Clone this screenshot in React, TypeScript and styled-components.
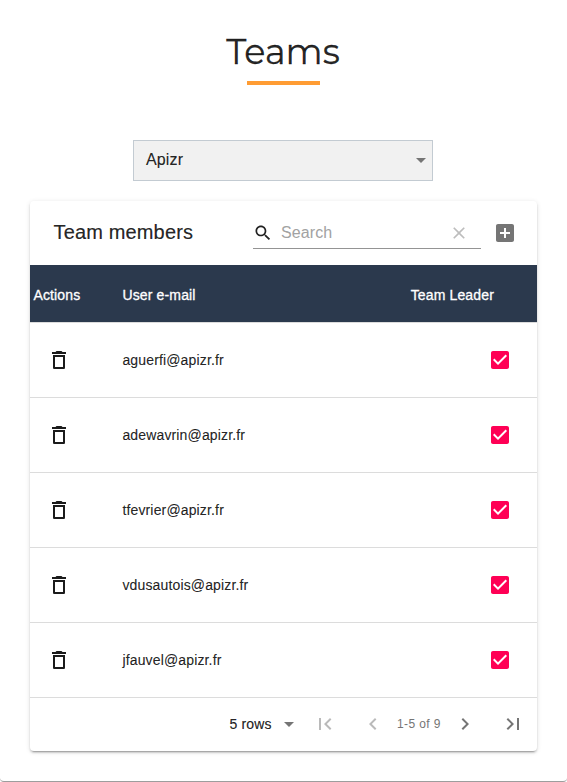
import React from 'react';
import styled, { createGlobalStyle } from 'styled-components';

const GlobalStyle = createGlobalStyle`
  *, *::before, *::after { box-sizing: border-box; }
  body {
    margin: 0;
    background: #fff;
    color: rgba(0, 0, 0, 0.87);
    font-family: "Liberation Sans", Arial, sans-serif;
  }
`;

const shadow =
  '0 3px 1px -2px rgba(0,0,0,0.2), 0 2px 2px 0 rgba(0,0,0,0.14), 0 1px 5px 0 rgba(0,0,0,0.12)';

const Page = styled.main`
  display: flex;
  flex-direction: column;
  align-items: center;
  height: 782px;
  overflow: hidden;
  border-bottom: 1px solid #9d9d9d;
  border-radius: 4px;
  background: #fff;
`;

const Title = styled.h1`
  margin: 29px 1px 0 0;
  height: 52px;
  line-height: 46px;
  font-family: Montserrat, Inter, sans-serif;
  font-size: 35px;
  font-weight: 400;
  white-space: nowrap;
  -webkit-text-stroke: 0.3px currentColor;
`;

const TitleRule = styled.div`
  width: 73px;
  height: 4px;
  background: #ff9c33;
`;

const TeamSelect = styled.div`
  display: flex;
  align-items: center;
  justify-content: space-between;
  width: 300px;
  height: 41px;
  margin: 55px 1px 20px 0;
  padding: 0 0 2px 12px;
  border: 1px solid #c3cbd2;
  background: #f1f1f1;
  font-size: 16px;
  letter-spacing: 0.15px;
  -webkit-text-stroke: 0.15px currentColor;

  svg { margin-right: -1px; }
`;

const Card = styled.section`
  width: 507px;
  height: 550px;
  border-radius: 4px;
  background: #fff;
  box-shadow: ${shadow};
`;

const Toolbar = styled.header`
  display: flex;
  align-items: center;
  height: 64px;
  padding: 0 20px 0 23.5px;
`;

const CardTitle = styled.h2`
  flex: 1;
  margin: 0;
  padding-bottom: 2px;
  font-size: 20px;
  font-weight: 400;
  letter-spacing: 0.15px;
  -webkit-text-stroke: 0.2px currentColor;
`;

const SearchField = styled.div`
  display: flex;
  align-items: center;
  width: 228px;
  height: 33px;
  margin: 0 12px 1px 0;
  padding: 2px 12px 0 0;
  border-bottom: 1px solid #949494;
`;

const Placeholder = styled.span`
  flex: 1;
  padding: 0 0 1px 8px;
  color: #a2a2a2;
  font-size: 16px;
  letter-spacing: 0.1px;
`;

const Icon = styled.svg<{ $size?: number; $tone?: string }>`
  display: block;
  flex: none;
  width: ${(p) => p.$size ?? 24}px;
  height: ${(p) => p.$size ?? 24}px;
  fill: ${(p) => p.$tone ?? '#757575'};
`;

const Row = styled.div<{ $head?: boolean }>`
  display: grid;
  grid-template-columns: 92.4px 1fr 150px;
  align-items: center;
  height: ${(p) => (p.$head ? 58 : 75)}px;
  padding-top: ${(p) => (p.$head ? 3 : 0)}px;
  border-bottom: 1px solid #dcdcdc;
  background: ${(p) => (p.$head ? '#2b394d' : 'transparent')};
  background-clip: padding-box;
  color: ${(p) => (p.$head ? '#fff' : 'inherit')};
  font-size: 14px;
  letter-spacing: 0.15px;
  -webkit-text-stroke: ${(p) => (p.$head ? '0.3px #fff' : '0.15px currentColor')};
`;

const ActionCell = styled.div<{ $head?: boolean }>`
  padding-left: ${(p) => (p.$head ? 3.4 : 17)}px;
`;

const LeaderCell = styled.div<{ $head?: boolean }>`
  display: flex;
  justify-content: flex-end;
  padding-right: ${(p) => (p.$head ? 43 : 25)}px;
`;

const Footer = styled.footer`
  display: flex;
  align-items: center;
  justify-content: flex-end;
  height: 52px;
  padding-right: 12px;
`;

const RowsSelect = styled.div`
  display: flex;
  align-items: center;
  width: 71.5px;
  margin-right: 12px;
  justify-content: space-between;
  font-size: 14px;
  white-space: nowrap;
  letter-spacing: 0.15px;
  -webkit-text-stroke: 0.2px currentColor;
`;

const Range = styled.span`
  width: 68px;
  padding-left: 12px;
  color: #757575;
  font-size: 12px;
  letter-spacing: 0.4px;
  white-space: nowrap;
`;

const PageButton = styled.span<{ $gap?: number }>`
  margin-right: ${(p) => p.$gap ?? 0}px;
`;

const paths = {
  search:
    'M15.5 14h-.79l-.28-.27C15.41 12.59 16 11.11 16 9.5 16 5.91 13.09 3 9.5 3S3 5.91 3 9.5 5.91 16 9.5 16c1.61 0 3.09-.59 4.23-1.57l.27.28v.79l5 4.99L20.49 19l-4.99-5zm-6 0C7.01 14 5 11.99 5 9.5S7.01 5 9.5 5 14 7.01 14 9.5 11.99 14 9.5 14z',
  clear:
    'M19 6.41L17.59 5 12 10.59 6.41 5 5 6.41 10.59 12 5 17.59 6.41 19 12 13.41 17.59 19 19 17.59 13.41 12z',
  addBox:
    'M19 3H5c-1.11 0-2 .9-2 2v14c0 1.1.89 2 2 2h14c1.1 0 2-.9 2-2V5c0-1.1-.9-2-2-2zm-2 10h-4v4h-2v-4H7v-2h4V7h2v4h4v2z',
  trash:
    'M6 19.5c0 1 .5 1.5 1.5 1.5h9c1 0 1.5-.5 1.5-1.5V7H6v12.5zM8 9h8v10H8V9zm7.5-5l-1-1h-5l-1 1H5v2h14V4z',
  checked:
    'M19 3H5c-1.11 0-2 .9-2 2v14c0 1.1.89 2 2 2h14c1.11 0 2-.9 2-2V5c0-1.1-.89-2-2-2zm-9 14l-5-5 1.41-1.41L10 14.17l7.59-7.59L19 8l-9 9z',
  dropDown: 'M7 10l5 5 5-5z',
  first: 'M18.41 16.59L13.82 12l4.59-4.59L17 6l-6 6 6 6zM6 6h2v12H6z',
  prev: 'M15.41 7.41L14 6l-6 6 6 6 1.41-1.41L10.83 12z',
  next: 'M10 6L8.59 7.41 13.17 12l-4.58 4.59L10 18l6-6z',
  last: 'M5.59 7.41L10.18 12l-4.59 4.59L7 18l6-6-6-6zM16 6h2v12h-2z',
};

function Glyph({ name, size, tone }: { name: keyof typeof paths; size?: number; tone?: string }) {
  return (
    <Icon viewBox="0 0 24 24" $size={size} $tone={tone} aria-hidden="true">
      <path d={paths[name]} />
    </Icon>
  );
}

const members = [
  'aguerfi@apizr.fr',
  'adewavrin@apizr.fr',
  'tfevrier@apizr.fr',
  'vdusautois@apizr.fr',
  'jfauvel@apizr.fr',
];

export default function App() {
  return (
    <>
      <GlobalStyle />
      <Page>
        <Title>Teams</Title>
        <TitleRule />
        <TeamSelect>
          Apizr
          <Glyph name="dropDown" />
        </TeamSelect>
        <Card>
          <Toolbar>
            <CardTitle>Team members</CardTitle>
            <SearchField>
              <Glyph name="search" size={20} tone="#212121" />
              <Placeholder>Search</Placeholder>
              <Glyph name="clear" size={20} tone="#bdbdbd" />
            </SearchField>
            <Glyph name="addBox" />
          </Toolbar>
          <Row $head>
            <ActionCell $head>Actions</ActionCell>
            <span>User e-mail</span>
            <LeaderCell $head>Team Leader</LeaderCell>
          </Row>
          {members.map((email) => (
            <Row key={email}>
              <ActionCell>
                <Glyph name="trash" tone="#1b1b1b" />
              </ActionCell>
              <span>{email}</span>
              <LeaderCell>
                <Glyph name="checked" tone="#ff0055" />
              </LeaderCell>
            </Row>
          ))}
          <Footer>
            <RowsSelect>
              5 rows
              <Glyph name="dropDown" />
            </RowsSelect>
            <PageButton $gap={24}>
              <Glyph name="first" tone="#bababa" />
            </PageButton>
            <PageButton>
              <Glyph name="prev" tone="#bababa" />
            </PageButton>
            <Range>1-5 of 9</Range>
            <PageButton $gap={24}>
              <Glyph name="next" />
            </PageButton>
            <PageButton>
              <Glyph name="last" />
            </PageButton>
          </Footer>
        </Card>
      </Page>
    </>
  );
}
